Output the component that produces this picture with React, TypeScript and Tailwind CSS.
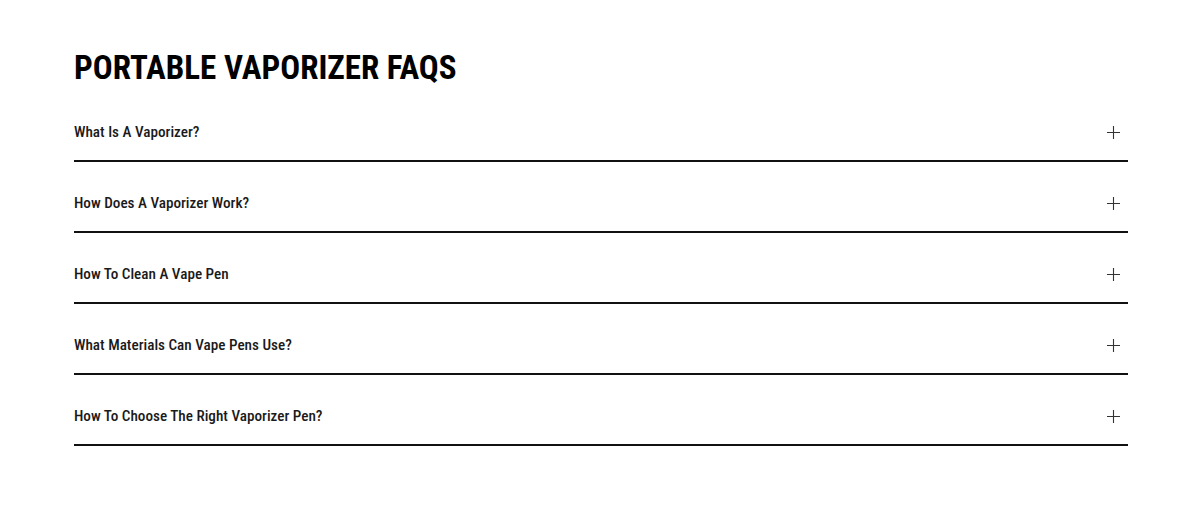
import React, { useState } from 'react';

const faqs = [
  'What Is A Vaporizer?',
  'How Does A Vaporizer Work?',
  'How To Clean A Vape Pen',
  'What Materials Can Vape Pens Use?',
  'How To Choose The Right Vaporizer Pen?',
];

function PlusIcon() {
  return (
    <svg width="13" height="13" viewBox="0 0 13 13" className="shrink-0 text-[#333]">
      <path d="M6.5 0v13M0 6.5h13" stroke="currentColor" strokeWidth="1.1" fill="none" />
    </svg>
  );
}

export default function App() {
  const [open, setOpen] = useState<number | null>(null);

  return (
    <div className="w-[1200px] h-[512px] bg-white font-['Roboto',sans-serif] font-stretch-condensed text-[#111]">
      <section className="pl-[74px] pr-[72px] pt-[51px]">
        <h2 className="text-[33px] font-bold leading-none text-black">
          PORTABLE VAPORIZER FAQS
        </h2>

        <div className="mt-[21px] flex flex-col">
          {faqs.map((q, i) => (
            <div key={i} className="border-b-2 border-[#111]">
              <button
                onClick={() => setOpen(open === i ? null : i)}
                className={`w-full flex items-center justify-between text-left ${i === 0 ? 'pt-[17px]' : 'pt-[31px]'} pb-[18px] pr-[8px] cursor-pointer`}
              >
                <span className="text-[15.2px] leading-[20px] font-medium text-[#1a1a1a]">{q}</span>
                <PlusIcon />
              </button>
              {open === i && (
                <div className="pb-4 text-sm text-gray-600">More information coming soon.</div>
              )}
            </div>
          ))}
        </div>
      </section>
    </div>
  );
}
